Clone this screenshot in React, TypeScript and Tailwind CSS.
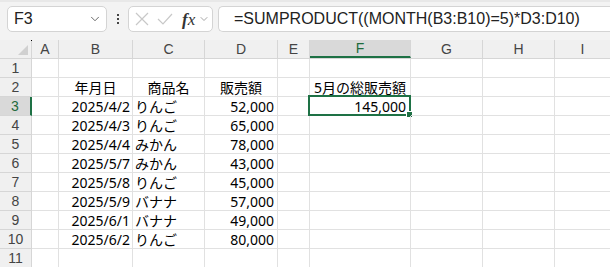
import { ChevronDown } from "lucide-react";

const cols = ["A", "B", "C", "D", "E", "F", "G", "H", "I"];
const widths = ["w-[27px]", "w-[74px]", "w-[72px]", "w-[73px]", "w-[32px]", "w-[101px]", "w-[72px]", "w-[72px]", "flex-1"];

const rows: { b: string; c: string; d: string }[] = [
  { b: "2025/4/2", c: "りんご", d: "52,000" },
  { b: "2025/4/3", c: "りんご", d: "65,000" },
  { b: "2025/4/4", c: "みかん", d: "78,000" },
  { b: "2025/5/7", c: "みかん", d: "43,000" },
  { b: "2025/5/8", c: "りんご", d: "45,000" },
  { b: "2025/5/9", c: "バナナ", d: "57,000" },
  { b: "2025/6/1", c: "バナナ", d: "49,000" },
  { b: "2025/6/2", c: "りんご", d: "80,000" },
];

function cellContent(r: number, c: number) {
  // r is the 1-based row number, c the column index (0 = A)
  if (r === 2) {
    if (c === 1) return { text: "年月日", align: "justify-center" };
    if (c === 2) return { text: "商品名", align: "justify-center" };
    if (c === 3) return { text: "販売額", align: "justify-center" };
    if (c === 5) return { text: "5月の総販売額", align: "justify-center" };
  }
  if (r >= 3 && r <= 10) {
    const d = rows[r - 3];
    if (c === 1) return { text: d.b, align: "justify-end pr-[2px]" };
    if (c === 2) return { text: d.c, align: "justify-start pl-[2px]" };
    if (c === 3) return { text: d.d, align: "justify-end pr-[3px]" };
  }
  if (r === 3 && c === 5) return { text: "145,000", align: "justify-end pr-[4px]" };
  return null;
}

export default function App() {
  return (
    <div className="w-[610px] h-[267px] overflow-hidden bg-white" style={{ fontFamily: '"Noto Sans", "Noto Sans CJK JP", sans-serif' }}>
      {/* formula bar */}
      <div className="h-[40px] bg-[#f3f3f3] border-t-[2px] border-[#e8e8e8] flex items-start pt-[4px] pl-[7px]">
        <div className="w-[100px] h-[26px] bg-white border border-[#d4d4d4] rounded-[5px] flex items-center pl-[6px] pr-[4px]">
          <span className="text-[16px] text-[#222] flex-1" style={{ fontFamily: '"Liberation Sans", sans-serif' }}>F3</span>
          <ChevronDown className="w-[14px] h-[14px] text-[#555]" strokeWidth={1.5} />
        </div>
        <div className="w-[21px] h-[26px] flex flex-col items-center justify-center gap-[2px]">
          <span className="w-[2px] h-[2px] bg-[#444]" />
          <span className="w-[2px] h-[2px] bg-[#444]" />
          <span className="w-[2px] h-[2px] bg-[#444]" />
        </div>
        <div className="w-[85px] h-[26px] bg-white border border-[#d4d4d4] rounded-[5px] flex items-center pl-[6px]">
          <svg width="14" height="14" viewBox="0 0 14 14" className="mr-[8px]">
            <path d="M1 1 L13 13 M13 1 L1 13" stroke="#c8c8c8" strokeWidth="1.2" fill="none" />
          </svg>
          <svg width="16" height="12" viewBox="0 0 16 12" className="mr-[9px]">
            <path d="M1 6 L6 11 L15 1" stroke="#c8c8c8" strokeWidth="1.2" fill="none" />
          </svg>
          <span className="text-[17px] italic text-[#333] leading-none" style={{ fontFamily: '"Liberation Serif", serif' }}>
            <span className="font-bold">f</span>x
          </span>
          <ChevronDown className="w-[12px] h-[12px] text-[#888] ml-[3px]" strokeWidth={1.5} />
        </div>
        <div className="flex-1 h-[26px] ml-[5px] bg-white border border-r-0 border-[#d4d4d4] rounded-l-[5px] flex items-center pl-[15px]">
          <span className="text-[16px] text-[#222] whitespace-nowrap" style={{ fontFamily: '"Liberation Sans", sans-serif' }}>
            =SUMPRODUCT((MONTH(B3:B10)=5)*D3:D10)
          </span>
        </div>
      </div>

      {/* column headers */}
      <div className="flex h-[19px] bg-[#f0f0f0] border-b border-[#d6d6d6]">
        <div className="w-[32px] border-r border-[#d6d6d6] relative">
          <span className="absolute left-[31px] top-0 w-[1px] h-[1px] bg-black" />
          <svg width="10" height="10" viewBox="0 0 10 10" className="absolute left-[18px] top-[5px]">
            <path d="M10 0 L10 10 L0 10 Z" fill="#d0d0d0" />
          </svg>
        </div>
        {cols.map((c, i) => (
          <div
            key={c}
            className={`${widths[i]} ${i === 8 ? "" : "border-r border-[#d6d6d6]"} ${i === 5 ? "bg-[#d9d9d9] border-b-[2px] border-b-[#1e7145] text-[#1e6b3c]" : "text-[#444]"} flex items-center justify-center text-[14px]`}
            style={{ fontFamily: '"Liberation Sans", sans-serif' }}
          >
            {c}
          </div>
        ))}
      </div>

      {/* rows */}
      {Array.from({ length: 11 }, (_, k) => k + 1).map((r) => (
        <div key={r} className="flex h-[19px]">
          <div
            className={`w-[32px] border-b border-[#d6d6d6] flex items-center justify-center text-[14px] ${r === 3 ? "bg-[#d9d9d9] border-r-[2px] border-r-[#1e7145] text-[#1e6b3c]" : "bg-[#f0f0f0] border-r border-r-[#d6d6d6] text-[#444]"}`}
            style={{ fontFamily: '"Liberation Sans", sans-serif' }}
          >
            {r}
          </div>
          {cols.map((c, i) => {
            const content = cellContent(r, i);
            return (
              <div
                key={c}
                className={`${widths[i]} relative border-b border-[#e1e1e1] ${i === 8 ? "" : "border-r border-r-[#e1e1e1]"} flex items-center pt-[1px] ${content ? content.align : ""} text-[14px] text-black whitespace-nowrap`}
              >
                {content ? content.text : null}
                {r === 3 && i === 5 && (
                  <>
                    <span className="absolute left-[-2px] top-[-2px] right-[-1px] bottom-[-1px] border-[2px] border-[#1e7145]" />
                    <span className="absolute right-[-3px] bottom-[-3px] w-[5px] h-[5px] bg-[#1e7145] border border-white box-content" />
                  </>
                )}
              </div>
            );
          })}
        </div>
      ))}
    </div>
  );
}
